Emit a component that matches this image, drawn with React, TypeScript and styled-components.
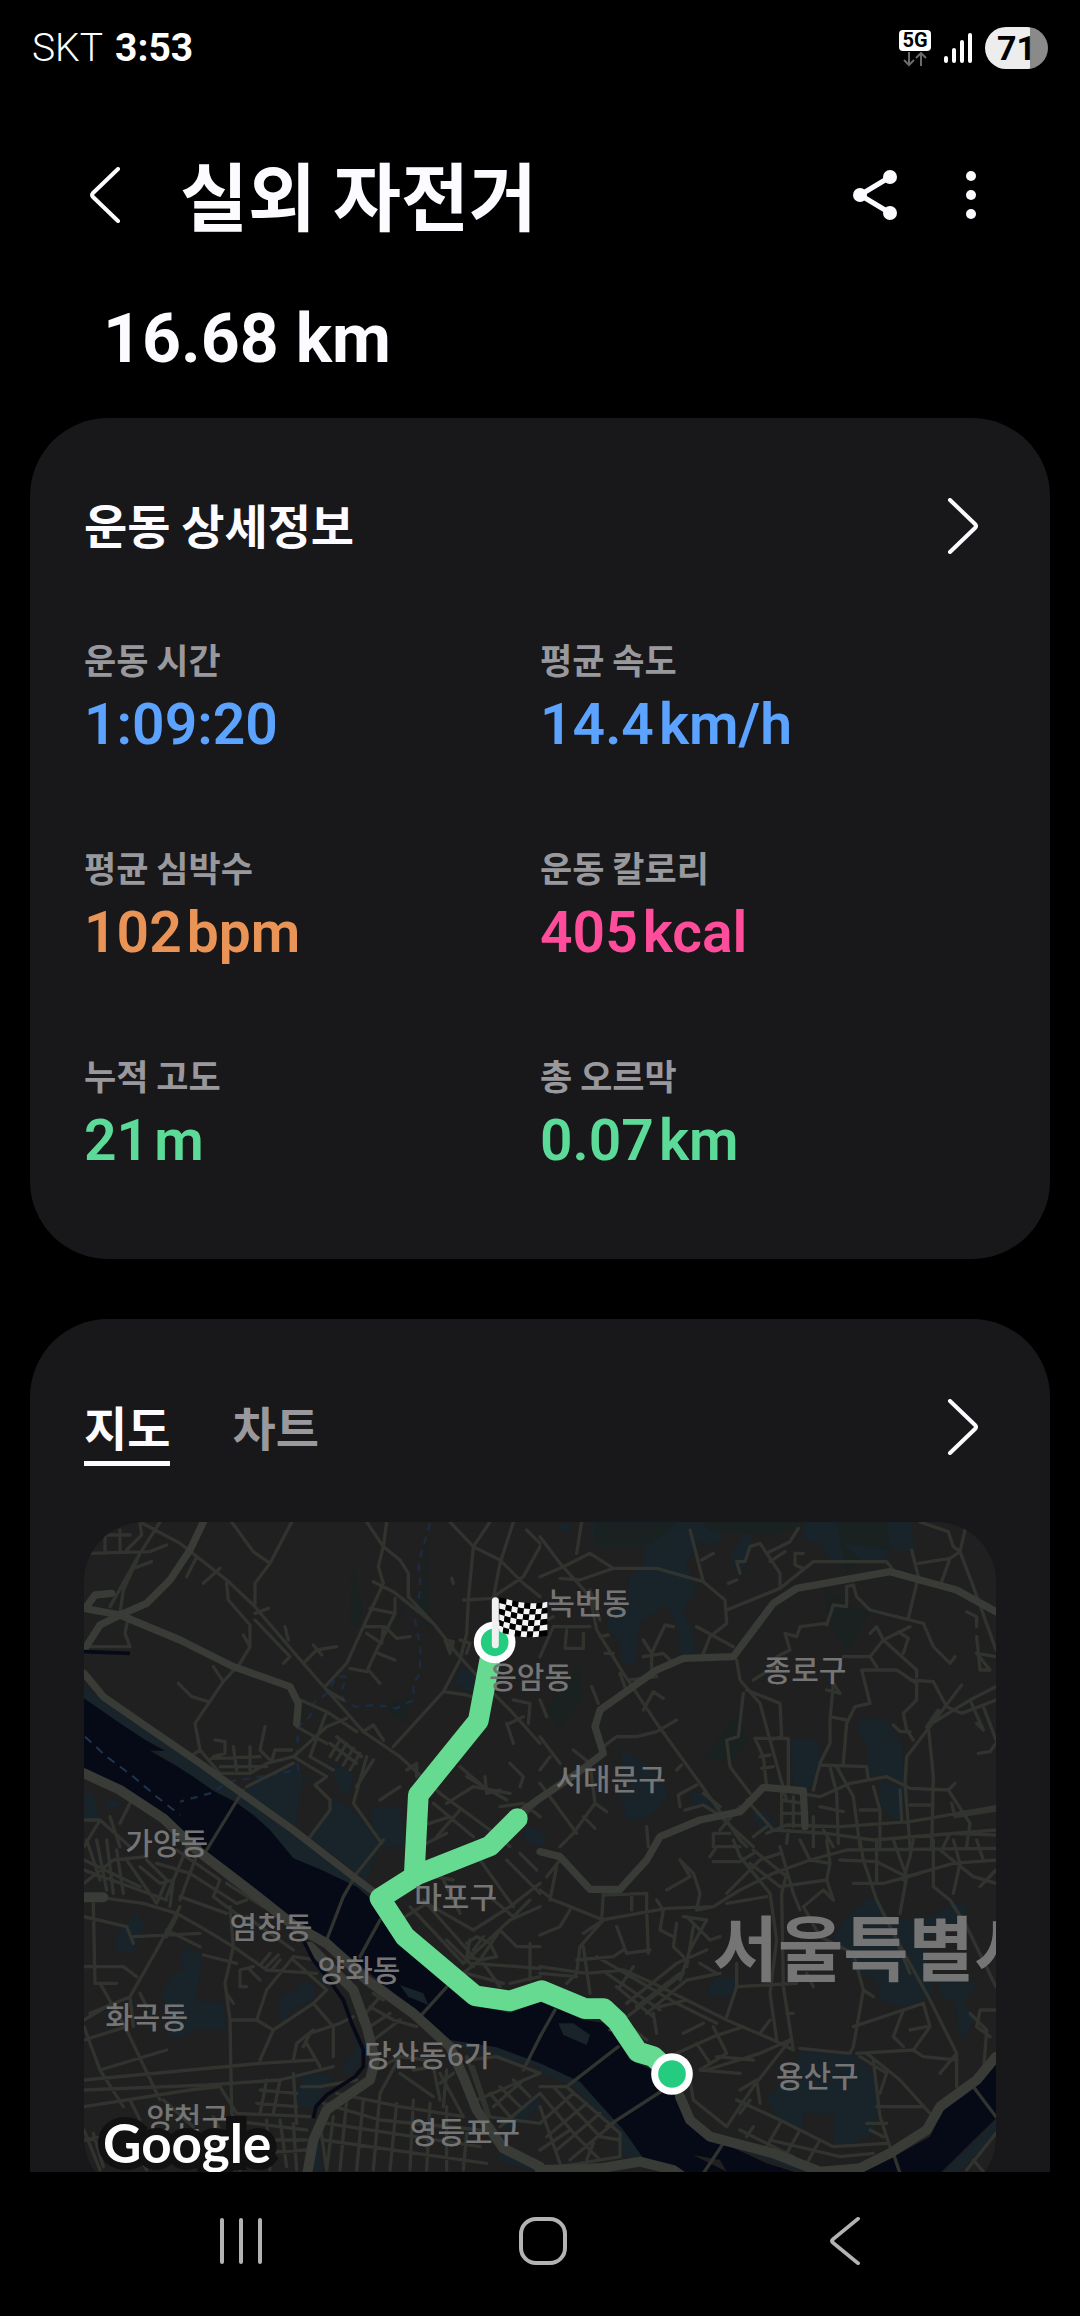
import React from 'react';
import styled, { createGlobalStyle } from 'styled-components';

const sans = `Roboto, "Noto Sans CJK KR", sans-serif`;
const korean = `"Noto Sans CJK KR", sans-serif`;

const GlobalStyle = createGlobalStyle`
  * { box-sizing: border-box; }
  body { margin: 0; background: #000; font-family: ${sans}; color: #fcfbff; }
  button { font: inherit; color: inherit; background: none; border: 0; padding: 0; cursor: pointer; }
  h1, h2, p, dl, dt, dd { margin: 0; }
  svg { display: block; }
`;

const Screen = styled.div`
  display: flex;
  flex-direction: column;
  height: 100vh;
  overflow: hidden;
`;

/* Status bar */
const StatusBar = styled.div`
  display: flex;
  align-items: center;
  justify-content: space-between;
  height: 96px;
  flex: none;
  padding: 0 32px;
  color: #fff;
`;
const StatusLeft = styled.div`
  display: flex;
  align-items: center;
  gap: 12px;
`;
const Carrier = styled.span`
  font-size: 39px;
  font-weight: 300;
`;
const Clock = styled.time`
  font-size: 39px;
  font-weight: 700;
`;
const StatusRight = styled.div`
  display: flex;
  align-items: center;
  gap: 13px;
`;
const Network = styled.div`
  display: flex;
  flex-direction: column;
  align-items: center;
  gap: 1px;
  width: 32px;
`;
const NetworkBadge = styled.span`
  width: 100%;
  border-radius: 4px;
  background: #fff;
  color: #000;
  font-size: 20px;
  line-height: 21px;
  font-weight: 700;
  text-align: center;
`;
const Battery = styled.div`
  width: 63px;
  height: 42px;
  border-radius: 21px;
  background: linear-gradient(90deg, #ededed 71%, #8a8a8a 71%);
  color: #000;
  font-size: 34px;
  line-height: 42px;
  font-weight: 700;
  text-align: center;
`;

/* Header */
const Header = styled.header`
  display: flex;
  align-items: center;
  flex: none;
  height: 198px;
  padding: 0 88px 0 84px;
`;
const IconButton = styled.button`
  display: grid;
  place-items: center;
  width: 42px;
  height: 72px;
`;
const Title = styled.h1`
  flex: 1;
  margin-left: 54px;
  padding-bottom: 4px;
  font-family: ${korean};
  font-size: 74px;
  line-height: 96px;
  font-weight: 700;
`;
const Actions = styled.div`
  display: flex;
  gap: 56px;
`;

/* Scrolling body */
const Content = styled.main`
  flex: 1;
  min-height: 0;
  padding: 0 30px;
  overflow-y: auto;
  scrollbar-width: none;
`;
const Distance = styled.p`
  padding: 5px 73px 39px;
  font-size: 68px;
  line-height: 80px;
  font-weight: 700;
`;
const Card = styled.section`
  margin-bottom: 60px;
  padding: 60px 54px;
  border-radius: 78px;
  background: #18181a;
`;
const CardHead = styled.div`
  display: flex;
  align-items: center;
  justify-content: space-between;
  height: 96px;
  padding-right: 12px;
`;
const CardTitle = styled.h2`
  padding-bottom: 4px;
  font-family: ${korean};
  font-size: 47px;
  line-height: 64px;
  font-weight: 700;
`;
const Stats = styled.dl`
  display: grid;
  grid-template-columns: 1fr 1fr;
  row-gap: 85px;
  padding: 60px 0 26px;
`;
const Stat = styled.div`
  display: grid;
  gap: 9px;
`;
const StatLabel = styled.dt`
  font-family: ${korean};
  font-size: 35px;
  line-height: 50px;
  font-weight: 700;
  color: #99989d;
`;
const StatValue = styled.dd<{ $color: string }>`
  display: flex;
  gap: 5px;
  font-size: 57px;
  line-height: 64px;
  font-weight: 600;
  color: ${(p) => p.$color};
`;

const Tabs = styled.div`
  display: flex;
  gap: 62px;
`;
const Tab = styled.button<{ $active?: boolean }>`
  padding: 6px 0 3px;
  border-bottom: 5px solid ${(p) => (p.$active ? '#fcfbff' : 'transparent')};
  font-family: ${korean};
  font-size: 47px;
  line-height: 64px;
  font-weight: 700;
  color: ${(p) => (p.$active ? '#fcfbff' : '#99989d')};
`;

/* Map */
const MapFrame = styled.div`
  position: relative;
  margin-top: 47px;
  aspect-ratio: 912 / 675;
  border-radius: 60px;
  background: #202020;
  overflow: hidden;
`;
const MapDrawing = styled.svg`
  position: absolute;
  inset: 0;
  width: 100%;
  height: 100%;
`;
const Place = styled.span<{ $x: number; $y: number; $city?: boolean }>`
  position: absolute;
  left: ${(p) => (p.$x - 12) / 27.36}%;
  top: ${(p) => (p.$y - 42) / 20.25}%;
  transform: translate(-50%, -50%);
  white-space: nowrap;
  font-family: ${korean};
  font-size: ${(p) => (p.$city ? 71 : 30)}px;
  line-height: 1;
  font-weight: ${(p) => (p.$city ? 700 : 500)};
  color: #757575;
`;
const Attribution = styled.span`
  position: absolute;
  left: 19px;
  bottom: 22px;
  font-family: Lato, sans-serif;
  font-size: 53px;
  line-height: 64px;
  font-weight: 700;
  color: #fff;
  -webkit-text-stroke: 14px #111;
  paint-order: stroke fill;
`;

/* System navigation */
const NavBar = styled.nav`
  display: grid;
  grid-template-columns: repeat(3, 1fr);
  flex: none;
  height: 144px;
  padding: 0 84px 6px 90px;
  background: #000;
`;
const NavButton = styled.button`
  display: grid;
  place-items: center;
`;

const Chevron = ({ left, color = '#fcfbff', h = 56, w = 4 }: { left?: boolean; color?: string; h?: number; w?: number }) => (
  <svg width="32" height={h} viewBox="0 0 32 56" preserveAspectRatio="none" fill="none" stroke={color} strokeWidth={w} strokeLinecap="round" strokeLinejoin="round">
    <path d={left ? 'M29 2 L4 26 Q2 28 4 30 L29 54' : 'M3 2 L28 26 Q30 28 28 30 L3 54'} />
  </svg>
);

const stats = [
  { label: '운동 시간', value: '1:09:20', unit: '', color: '#5ba3ff' },
  { label: '평균 속도', value: '14.4', unit: 'km/h', color: '#5ba3ff' },
  { label: '평균 심박수', value: '102', unit: 'bpm', color: '#ea9356' },
  { label: '운동 칼로리', value: '405', unit: 'kcal', color: '#ff4d9b' },
  { label: '누적 고도', value: '21', unit: 'm', color: '#5cda98' },
  { label: '총 오르막', value: '0.07', unit: 'km', color: '#5cda98' },
];

const places: { name: string; x: number; y: number; city?: boolean }[] = [
  { name: '녹번동', x: 1526, y: 280 },
  { name: '응암동', x: 1352, y: 500 },
  { name: '종로구', x: 2175, y: 480 },
  { name: '서대문구', x: 1592, y: 808 },
  { name: '가양동', x: 260, y: 998 },
  { name: '마포구', x: 1127, y: 1160 },
  { name: '염창동', x: 573, y: 1252 },
  { name: '양화동', x: 837, y: 1380 },
  { name: '화곡동', x: 200, y: 1520 },
  { name: '당산동6가', x: 1043, y: 1635 },
  { name: '양천구', x: 323, y: 1825 },
  { name: '영등포구', x: 1155, y: 1867 },
  { name: '용산구', x: 2212, y: 1697 },
  { name: '서울특별시', x: 2388, y: 1308, city: true },
];

/* The map is drawn as four quadrants; each group is shifted into place. */
const NE = 'translate(1380 0)';
const SW = 'translate(0 990)';
const SE = 'translate(1380 990)';

const parks = {
  nw: 'M12 530 L120 600 L260 690 L480 850 L700 1010 L860 1120 L880 1190 L620 1050 L540 960 L400 850 L290 770 L120 645 L12 575Z M490 850 L520 820 L640 765 L750 860 L745 900 L690 985 L860 1110 L900 1000 L810 890 L750 860 L705 825 L670 800 L640 990 L560 930Z M755 775 L790 765 L820 800 L810 850 L780 850Z M870 910 L890 890 L960 890 L975 1010 L900 1010Z M1125 520 L1140 480 L1175 475 L1195 540 L1170 550Z M12 850 L40 850 L60 930 L12 930Z M70 860 L130 880 L90 900Z M1340 950 L1380 960 L1380 1010 L1330 990Z',
  ne: 'M150 36 L540 36 L550 80 L510 110 L480 90 L440 160 L470 240 L430 300 L460 380 L470 430 L420 430 L410 350 L380 280 L300 340 L285 460 L250 460 L240 400 L200 350 L210 300 L260 290 L265 200 L310 170 L310 110 L165 110Z M790 36 L1115 36 L1120 110 L1085 130 L1055 110 L1030 150 L870 150 L840 100 L790 90Z M960 620 L1040 630 L1090 710 L1090 820 L1035 805 L985 790 L980 700 L955 680Z M750 690 L835 690 L840 740 L810 840 L760 830Z M245 720 L290 740 L370 810 L385 860 L330 920 L260 930 L240 850Z M445 845 L490 850 L530 900 L470 890Z M640 905 L670 900 L710 940 L680 970 L645 940Z M1020 815 L1095 830 L1085 930 L1055 925 L1020 880Z M570 140 L620 60 L640 100 L600 200Z M0 965 L20 975 L10 1010 L0 1010Z M60 40 L95 40 L90 65 L60 60Z',
  sw: 'M160 230 L175 215 L200 270 L175 280 L160 340 L100 330 L120 270Z M300 340 L325 320 L370 350 L345 480 L430 490 L440 570 L350 570 L290 600 L260 580 L270 540 L245 460 L280 400 L310 390Z M650 450 L670 420 L705 440 L700 480 L640 500 L610 550 L595 530 L605 470Z M660 710 L720 697 L765 710 L740 740 L700 800 L650 800 L645 750 L665 740Z M870 410 L1020 530 L1110 600 L1250 615 L1380 650 L1380 680 L1200 640 L1090 610 L980 520Z M950 435 L1030 460 L1040 495 L980 470Z M1255 860 L1380 770 L1380 800 L1290 870Z M700 890 L715 880 L725 990 L700 1000Z M1260 930 L1380 975 L1380 1000 L1250 960Z M790 470 L850 640 L820 700 L780 700 L830 620Z',
  se: 'M0 665 L110 700 L200 790 L260 860 L310 960 L250 950 L240 870 L200 850 L100 740 L0 700Z M60 545 L100 550 L150 585 L140 615 L70 585Z M0 510 L55 540 L30 560 L0 545Z M530 410 L580 410 L590 440 L560 470 L505 465 L505 440Z M880 290 L920 230 L985 175 L1020 180 L1050 240 L1180 230 L1240 185 L1280 200 L1265 260 L1150 300 L1180 460 L1110 505 L1020 480 L1010 420 L950 400Z M1190 420 L1315 430 L1270 490 L1310 540 L1260 595 L1245 480 L1210 480Z M780 635 L940 640 L1000 700 L1015 800 L1000 885 L940 910 L880 910 L885 825 L790 820 L790 880 L710 830 L680 770 L750 720Z M430 800 L470 860 L600 900 L840 990 L760 990 L560 910 L480 880 L440 840Z M1368 840 L1368 890 L1250 1000 L1210 1000Z M1280 995 L1330 1000 L1368 1040 L1280 1080Z',
};

const woods =
  'M815 175 L850 310 L835 345 L812 345Z M1040 60 L1050 360 L1020 320 L1010 250 L940 350 L980 270 L1025 240Z M910 590 L990 560 L975 640Z M1540 40 L1790 40 L1710 105 L1550 105Z M1870 36 L2180 36 L2080 75 L1890 65Z M2270 36 L2420 36 L2430 120 L2290 100 L2340 150 L2300 190Z M2230 230 L2310 290 L2370 310 L2300 420 L2250 340Z M1400 600 L1490 475 L1510 560 L1440 650Z M1870 750 L1980 600 L2000 700 L1960 750Z';

const river =
  'M12 565 L120 640 L200 692 L255 722 L210 722 L290 768 L340 800 L400 842 L465 875 L520 915 L570 960 L640 1045 L720 1078 L830 1130 L900 1190 L960 1300 L1160 1480 L1290 1510 L1380 1475 L1510 1530 L1580 1540 L1650 1650 L1740 1690 L1800 1780 L1840 1850 L1920 1895 L2060 1960 L2220 2010 L2340 1980 L2440 1940 L2550 1880 L2590 1800 L2710 1700 L2748 1650 L2748 1825 L2570 2000 L2520 2070 L1900 2070 L1780 1970 L1690 1945 L1630 1860 L1500 1715 L1380 1660 L1250 1612 L1110 1590 L1020 1515 L870 1390 L740 1285 L600 1205 L500 1115 L385 1028 L250 925 L130 845 L12 775Z';

const highways =
  'M12 295 L120 315 L200 280 L270 210 L330 120 L370 36 M120 315 L300 390 L460 470 L630 530 L655 580 L650 640 M120 315 L60 345 L12 420 M12 490 L70 560 L200 650 L360 760 L500 860 L640 960 L820 1100 L900 1160 M20 290 L45 255 L95 250 M2748 305 L2630 240 L2520 210 L2430 185 L2150 235 L2080 280 L1960 440 L1810 445 L1730 480 L1560 600 L1545 650 L1570 730 L1490 790 L1380 865 L1330 900 M1380 1025 L1440 1040 L1530 1138 L1620 1138 L1700 1050 L1740 980 L1860 930 L1980 905 L2050 832 L2170 842 L2175 950';

const riverside =
  'M12 790 L120 840 L250 925 L350 1020 L520 1150 L640 1245 L740 1300 L860 1410 L1000 1510 L1110 1610 L1150 1700 L1190 1800 L1270 1915 L1380 1970 M690 1310 L820 1440 L860 1550 L885 1650 L870 1710 L740 1800 L700 1890 L680 2000 M1800 1760 L1830 1830 L1890 1880 L2080 1930 L2220 1985 L2340 1975 L2430 1930 L2540 1860 L2580 1790 L2690 1710 L2748 1640 M1380 1980 L1560 1975 L1680 1955 L1780 1980 L1880 2050 M12 1162 L70 1162';

const roads = {
  nw: 'M180 36 L300 100 L440 210 L520 285 L610 390 L670 460 L740 540 L850 665 L960 740 L1080 850 L1230 960 L1290 1010 M20 130 L210 125 L260 105 M75 75 L75 130 M120 60 L120 120 M140 120 L185 75 L180 40 M70 75 L150 75 M240 36 L180 130 L130 240 L120 310 M180 130 L90 290 M160 175 L215 155 M455 36 L520 125 L570 160 L635 36 M570 160 L525 220 L525 285 M320 200 L350 140 M370 220 L420 175 M440 220 L445 270 L510 345 L510 410 L480 460 L430 515 L345 640 L360 720 M490 375 L510 410 M525 310 L565 295 M525 330 L630 440 L610 460 M615 350 L625 390 M670 460 L710 420 L770 410 M700 405 L725 435 M400 470 L430 515 M295 520 L335 560 L385 575 M735 530 L800 460 L850 350 L910 220 L895 170 L910 110 L860 36 M910 110 L920 36 M910 110 L960 150 L985 190 L985 260 L1060 340 L1130 430 L1230 540 L1290 600 L1380 700 M880 215 L940 245 L1060 340 M945 265 L945 310 L895 410 L860 485 L810 475 M870 295 L945 310 M850 350 L910 350 L905 400 L860 370 M915 350 L950 385 L990 380 M865 480 L900 520 M895 430 L945 450 M640 560 L740 605 L830 665 M640 740 L740 650 L800 625 M640 740 L560 760 L510 790 L420 790 L360 720 L330 740 M405 690 L435 695 L435 730 L400 740 M460 710 L470 780 M510 710 L510 780 M395 745 L540 740 M420 770 L560 770 M555 650 L540 720 L575 755 M575 755 L585 720 L635 720 M640 740 L740 800 L705 825 L750 870 L750 900 L690 980 M650 650 L740 700 M690 740 L760 780 M500 830 L640 760 M490 840 L380 1020 M740 540 L790 570 M740 605 L690 740 M770 680 L845 740 M750 700 L830 760 M780 690 L750 740 M800 700 L770 750 M820 715 L790 765 M840 730 L810 780 M860 740 L820 880 L905 1000 M880 750 L830 830 M900 870 L960 830 M850 665 L880 645 L910 690 M940 710 L1090 545 L1140 450 L1160 370 L1165 270 L1180 110 L1110 36 M1180 110 L1230 36 M1180 110 L1260 150 L1330 220 L1380 260 M1150 270 L1240 265 L1260 160 L1300 36 M1090 545 L1160 555 L1230 580 M1095 390 L1120 395 L1110 430 L1095 390 M1140 390 L1170 400 L1160 430 M1115 205 L1120 220 M1330 200 L1240 260 M1330 200 L1380 110 M1340 60 L1380 100 M1300 570 L1350 580 L1345 640 M1280 640 L1300 700 M1290 640 L1330 620 M1100 880 L1180 830 L1290 850 M1160 800 L1280 870 M1140 770 L1210 830 M1060 880 L1180 980 M1070 980 L1140 900 M1020 950 L1110 920 M1040 1000 L1100 970 M1215 800 L1220 850 L1260 840 M1290 760 L1330 800 L1320 830 M1260 890 L1330 880 L1380 920 M1380 870 L1330 920 M20 410 L150 410 L135 370 L145 320 M980 780 L1010 760 L1010 800 M12 930 L60 930 L150 1010 M90 920 L120 1010 M60 930 L12 1010 M150 880 L120 940',
  ne: 'M0 200 L70 170 L150 130 L220 175 L350 175 L490 215 L555 270 L560 340 L510 380 L490 430 M0 80 L60 160 L150 260 L170 360 L250 490 L350 640 L480 820 L600 990 L620 1010 M110 130 L125 36 M60 205 L120 210 L220 175 M450 60 L490 215 M485 150 L520 130 M560 300 L720 235 L820 155 L1040 155 L1060 180 M720 235 L720 190 L660 100 L630 110 L615 155 L590 155 L600 190 M680 130 L750 95 L775 55 M690 155 L735 125 M790 130 L765 130 L765 165 L790 175 M565 220 L590 210 M470 350 L580 410 M590 450 L600 510 L660 580 L690 690 L740 870 M620 540 L720 580 L725 680 M610 550 L595 680 L560 690 L570 770 L630 850 M640 510 L720 460 M690 690 L725 680 M660 740 L690 735 M665 775 L700 770 M645 685 L745 685 L745 830 M645 685 L670 740 L680 830 M860 340 L780 350 L770 380 L735 370 L750 420 L710 440 M860 345 L880 285 L920 290 L920 230 L940 225 L950 260 L990 300 L1150 340 L1180 410 L1230 460 L1245 440 M1105 325 L1135 200 L1115 120 M1135 160 L1230 145 L1260 125 L1275 60 M1230 145 L1205 215 M1260 125 L1300 230 L1368 420 M1140 36 L1225 65 L1240 110 L1260 125 M1280 305 L1310 320 L1310 350 M1310 380 L1320 480 L1350 480 L1310 430 L1368 440 M990 370 L1010 350 L1030 390 L990 440 L910 440 M1030 390 L1110 350 M1075 365 L1105 385 L1090 430 M1030 390 L1130 480 L1130 500 M965 480 L1070 480 L1130 520 L1130 570 L1090 610 L1100 660 L1120 690 M965 480 L990 580 L945 590 L920 640 L910 760 M860 540 L900 550 L880 520 L870 630 L870 700 L840 760 L820 840 M870 620 L920 630 M990 440 L1010 470 M1110 510 L1180 515 L1220 590 L1265 610 L1368 570 M1265 525 L1100 740 L1095 820 L1110 1010 M1165 650 L1180 800 L1175 1010 M1195 600 L1160 650 M1368 530 L1290 570 L1160 650 M1290 570 L1330 660 L1310 640 M1330 590 L1368 690 M1315 730 L1350 725 L1368 700 M1060 645 L1080 665 L1110 665 M840 765 L980 770 L985 810 L1040 800 L1110 835 L1225 840 L1245 820 M1110 885 L1180 885 M1225 840 L1290 940 M1235 880 L1245 920 L1368 900 M720 840 L840 860 L930 820 L1040 800 M870 770 L890 850 L895 1000 M890 770 L940 860 L960 1010 M725 840 L725 960 M760 860 L760 950 M725 870 L790 880 M725 910 L800 910 M680 970 L740 945 L900 950 L1110 935 L1368 890 M700 960 L860 970 L1000 990 L1368 960 M960 900 L1020 900 L1020 1010 M1000 830 L1020 900 M1080 840 L1085 930 M840 890 L910 905 M820 920 L820 1010 M850 960 L880 1010 M1210 1010 L1230 970 L1368 975 M1280 1010 L1290 940 M740 1000 L745 960 M520 1010 L520 970 L570 970 M530 910 L640 1010 M620 870 L700 960 M640 980 L680 950 M600 890 L540 960 M420 890 L415 855 L470 825 M490 850 L540 890 M435 900 L490 885 L530 910 M410 780 L425 765 M310 600 L340 545 L370 565 M410 630 L350 665 L290 680 L230 680 L190 710 M260 545 L240 490 M310 390 L335 430 L335 480 M335 430 L375 345 L400 350 M310 440 L370 430 L390 450 M270 510 L350 500 M155 530 L175 580 M40 350 L90 350 L150 350 M80 360 L75 415 L130 415 L130 370 M150 240 L180 330 M0 340 L40 320 M0 440 L40 350 M0 570 L20 620 M0 680 L60 760 M0 820 L110 970 M100 720 L150 760 L165 880 L200 905 M165 880 L100 970 L60 1010 M320 950 L325 1010 M0 780 L30 740 M130 920 L165 955 M205 375 L180 380 M220 430 L195 430',
  sw: 'M12 130 L100 60 L200 50 M20 0 L60 120 M50 0 L80 150 M80 0 L100 160 M110 30 L130 160 M140 60 L230 190 M12 60 L180 140 M12 90 L260 180 M40 170 L190 190 L290 220 L360 260 L460 320 L560 390 L710 400 M290 220 L230 330 L150 470 L30 520 M12 230 L140 260 L160 310 M160 290 L360 280 M40 190 L45 430 L110 430 M12 380 L130 380 L170 410 M60 430 L140 570 L240 780 M150 470 L160 560 M180 460 L200 500 M12 540 L80 500 M12 600 L140 560 M60 690 L260 630 M12 720 L540 670 L700 660 M12 750 L380 735 L600 720 L760 680 M12 800 L330 750 L420 740 L470 820 M12 560 L60 690 L130 800 M450 200 L460 320 L435 430 L450 540 L455 820 L470 850 M370 345 L470 370 M460 490 L440 460 M450 540 L530 540 L580 570 L540 660 M530 540 L560 450 L640 350 L710 360 M580 570 L700 490 L740 450 L640 360 M520 380 L480 390 L480 440 L500 440 M510 390 L540 420 M545 370 L570 340 M560 380 L595 345 M575 390 L600 360 M200 60 L260 120 L230 190 M180 80 L240 130 L280 120 L270 200 M230 70 L330 100 L470 190 L500 180 M290 30 L420 120 L400 170 M360 20 L300 180 M330 0 L260 170 M440 130 L550 200 L700 290 M300 170 L440 220 M300 200 L260 280 M260 270 L360 320 M260 290 L290 230 M500 230 L640 330 M400 170 L480 230 M740 300 L790 170 L830 100 L910 0 M840 350 L900 240 M1020 530 L1110 430 M1330 690 L1380 590 M670 620 L690 580 L780 550 L820 530 M640 660 L650 610 L700 570 M700 490 L760 560 L760 650 M680 610 L720 680 M560 720 L540 820 M600 720 L580 820 M640 700 L650 850 M540 750 L650 760 M530 790 L650 800 M470 820 L690 830 M440 840 L680 870 M500 900 L680 900 M520 940 L680 930 M600 840 L620 980 M560 840 L570 990 M640 850 L650 990 M400 830 L480 990 M200 990 L170 930 M12 870 L60 990 M12 900 L180 870 M40 880 L70 980 M250 780 L340 860 M150 780 L180 840 M665 740 L720 740 L830 720 M840 540 L900 470 M870 500 L940 540 L1010 560 M870 560 L930 520 M880 600 L960 540 M910 480 L880 460 M730 790 L900 840 L1200 870 M770 760 L960 800 L1150 830 M740 850 L1200 920 M730 900 L1220 970 M870 700 L960 650 L1040 660 M960 650 L900 760 M1000 690 L1060 680 L1080 780 M1100 690 L1090 800 M1120 700 L1080 730 M760 830 L740 990 M800 780 L780 990 M850 780 L830 990 M900 760 L880 990 M950 790 L930 990 M1000 780 L990 990 M1050 790 L1040 990 M1100 800 L1100 990 M1160 880 L1150 990 M720 850 L740 990 M960 700 L1060 770 M1080 700 L1150 830 M1160 650 L1220 820 M1180 680 L1230 830 M1160 660 L1250 650 L1380 700 M1190 780 L1380 700 M1230 760 L1290 830 M1260 740 L1320 800 M1300 720 L1350 770 M1240 800 L1330 720 M1220 830 L1380 850 M1260 860 L1380 760 M1010 100 L1120 120 M960 240 L1040 190 L1180 270 L1290 200 L1380 130 M990 200 L1150 370 L1290 240 L1380 200 M1030 180 L1180 350 M1080 100 L1140 220 M1200 60 L1300 200 M1280 60 L1380 160 M1320 40 L1370 90 M1160 310 L1190 290 L1230 310 L1250 350 L1200 360 L1160 350 L1170 300 M1210 290 L1180 330 M1110 430 L1200 360 L1260 270 L1310 320 L1380 320 M1180 370 L1380 385 M1160 400 L1270 430 M1290 430 L1380 410 M1210 370 L1260 440 M1350 310 L1350 420 M1240 180 L1300 230 L1350 180 M1100 300 L1180 380',
  se: 'M0 150 L40 180 L90 200 L190 240 L130 280 M30 180 L50 80 M60 60 L20 110 M90 210 L60 260 L0 285 M190 160 L185 240 L380 205 L520 200 L600 150 L700 100 L810 60 L920 30 L1368 25 M190 165 L320 160 L320 210 L325 340 M275 160 L275 210 M230 260 L260 340 L330 330 M190 240 L120 320 L110 400 L80 430 M130 320 L150 460 M110 360 L220 350 L250 330 M350 180 L370 210 L360 270 L400 290 M380 150 L450 110 L420 60 L460 100 L480 160 L470 210 L520 200 M410 250 L400 320 L430 350 M440 230 L510 300 L540 290 M430 230 L500 240 L450 330 L420 420 M460 260 L440 380 M0 380 L140 400 L250 390 L340 430 L440 480 L560 540 L700 600 L760 630 M0 400 L110 410 M170 350 L290 420 L410 490 L530 550 M200 400 L360 510 M230 440 L340 530 M260 490 L410 370 L500 330 M290 500 L420 400 M320 520 L440 420 M210 570 L430 400 M350 580 L340 520 M280 380 L240 440 M270 560 L320 600 M360 500 L440 480 M490 550 L430 580 M410 640 L520 590 L610 560 M470 610 L510 670 M520 560 L560 640 L480 690 L600 700 M500 690 L660 640 L750 600 M530 650 L640 660 M440 660 L460 780 L560 860 L640 740 L750 600 M590 780 L720 840 L880 920 L1040 910 M600 750 L650 720 L660 790 M630 780 L600 820 M710 600 L690 460 L710 300 L690 160 L600 50 L580 0 M760 630 L730 440 L725 160 L740 100 M590 440 L770 430 M590 370 L590 440 L560 530 M740 520 L760 520 M690 540 L660 580 M720 20 L760 160 L780 210 M630 70 L720 140 L860 120 M640 30 L740 110 M560 160 L660 60 L720 40 M560 190 L680 170 M510 50 L530 20 L600 20 M520 65 L600 65 L640 40 M780 0 L810 60 L870 70 L860 120 L880 180 M860 0 L870 70 M900 60 L1010 65 L1100 110 L1240 70 L1368 60 M940 130 L1030 130 L1140 100 M960 0 L970 60 L1010 180 L1060 280 L1170 480 L1210 560 L1250 640 L1250 740 M1010 0 L1010 130 M1060 0 L1100 110 L1080 220 M1120 0 L1110 50 L1090 120 M1180 0 L1180 140 L1230 180 L1280 260 L1368 440 M1240 0 L1260 70 L1240 160 M1200 30 L1300 110 L1368 130 M1310 0 L1330 60 M1368 90 L1320 140 M880 180 L850 150 L790 200 L840 290 L940 340 L970 450 M1020 200 L1060 280 L1110 400 M1000 470 L970 450 L940 620 L930 640 L780 625 M940 560 L1090 510 L1150 490 L1170 560 L1120 630 L950 640 M1090 510 L1060 590 L1090 620 M1110 570 L1160 560 M1120 630 L1150 650 L1250 660 M980 640 L1080 720 L1170 820 M1010 800 L1150 800 M1000 660 L1020 830 L1050 920 M960 650 L1040 700 L1020 760 M1368 510 L1320 510 L1310 560 L1350 590 M1290 520 L1340 570 L1330 700 M1250 640 L1200 700 M1300 740 L1368 830 M1060 940 L1080 1000 M490 1000 L550 910 M200 860 L370 750 M0 740 L80 740 L235 620 M0 590 L45 510 M80 740 L240 880 L240 950 L60 980 M0 760 L110 890 L180 960 M40 740 L180 890 L240 900 M0 800 L60 970 M0 850 L100 760 M20 890 L140 790 M50 930 L180 820 M90 960 L220 850 M0 930 L90 870 M140 960 L160 910 M640 860 L620 890 M720 850 L680 920 M780 870 L740 940 M840 900 L800 970 M690 900 L900 950 L1000 940 M600 870 L760 950 M980 850 L1040 850 M990 870 L1030 890 M1368 880 L1280 990 M1300 960 L1368 1040 M820 440 L800 400 M440 420 L540 400 M530 400 L480 370',
};

const trails =
  'M1050 40 L1030 110 L1015 160 L1022 230 L1005 330 L1022 420 L1020 490 L1000 520 L1000 570 L950 595 L890 585 L825 590 L790 570 L785 540 L800 500 L770 500 L740 550 L700 580 L690 620 L655 650 L650 740 L655 780 L540 800 L450 815 L390 850 L300 875';
const ferry = 'M15 680 L80 740 L160 800 L230 860 L300 915';
const stream = 'M672 1295 L700 1350 L740 1400 L790 1470 L815 1540 L850 1620 L850 1670 L825 1700 L740 1755 L708 1790 L700 1825 M12 425 L150 430';
const route =
  'M1235 420 L1195 632 L1015 855 L1003 1090 M1312 926 L1230 1008 L1010 1095 L900 1165 L975 1280 L1185 1457 L1290 1473 L1385 1442 L1515 1496 L1572 1496 L1612 1534 L1674 1626 L1720 1640 L1776 1692';

/* Chequered cloth, sheared row by row so that it seems to wave. */
const FinishFlag = () => {
  const cols = 8;
  const rows = 6;
  const w = 18;
  const h = 17;
  const top = (c: number) => 262 + Math.sin((c / cols) * 2.3) * 18;
  const side = (c: number, r: number) => 1258 + c * w - (c === 0 || c === cols ? 0 : r * 2 - 4);
  const corner = (c: number, r: number) => `${side(c, r)} ${top(c) + r * h}`;
  const squares: React.ReactNode[] = [];
  for (let c = 0; c < cols; c++) {
    for (let r = 0; r < rows; r++) {
      squares.push(
        <path
          key={`${c}-${r}`}
          fill={(c + r) % 2 ? '#f4f4f4' : '#000'}
          d={`M${corner(c, r)} L${corner(c + 1, r)} L${corner(c + 1, r + 1)} L${corner(c, r + 1)}Z`}
        />,
      );
    }
  }
  return (
    <g>
      {squares}
      <path d="M1246 272 V404" stroke="#f0f0f0" strokeWidth="21" strokeLinecap="round" />
    </g>
  );
};

const RouteMap = () => (
  <MapFrame>
    <MapDrawing viewBox="12 36 2736 2025" aria-hidden="true">
      <g fill="#18232a">
        <path d={parks.nw} />
        <path d={parks.ne} transform={NE} />
        <path d={parks.sw} transform={SW} />
        <path d={parks.se} transform={SE} />
      </g>
      <path d={woods} fill="#1a2121" />
      <path d={river} fill="#060a17" />
      <path d="M960 1425 L1030 1450 L1045 1485 L985 1460Z M1435 1540 L1480 1540 L1530 1575 L1520 1605 L1450 1575Z" fill="#18232a" />
      <path d="M1840 1935 L1920 1950 L1940 1985Z" fill="#202020" />
      <path d={trails} fill="none" stroke="#1c2c40" strokeWidth="7" strokeDasharray="22 20" />
      <path d={ferry} fill="none" stroke="#22344b" strokeWidth="6" strokeDasharray="26 20" />
      <g fill="none" stroke="#31332f" strokeWidth="10" strokeLinecap="round" strokeLinejoin="round">
        <path d={roads.nw} />
        <path d={roads.ne} transform={NE} />
        <path d={roads.sw} transform={SW} />
        <path d={roads.se} transform={SE} />
      </g>
      <g fill="none" stroke="#393b37" strokeLinecap="round" strokeLinejoin="round">
        <path d={highways} strokeWidth="22" />
        <path d={riverside} strokeWidth="30" />
      </g>
      <path d={stream} fill="none" stroke="#060a17" strokeWidth="11" />
      <path d={route} fill="none" stroke="#65da90" strokeWidth="62" strokeLinecap="round" strokeLinejoin="round" />
    </MapDrawing>
    {places.map((p) => (
      <Place key={p.name} $x={p.x} $y={p.y} $city={p.city}>
        {p.name}
      </Place>
    ))}
    <MapDrawing viewBox="12 36 2736 2025" role="img" aria-label="경로">
      <g fill="#24cc80" stroke="#fff" strokeWidth="21">
        <circle cx="1244" cy="397" r="52" />
        <circle cx="1776" cy="1692" r="52" />
      </g>
      <FinishFlag />
    </MapDrawing>
    <Attribution>Google</Attribution>
  </MapFrame>
);

export default function App() {
  return (
    <Screen>
      <GlobalStyle />
      <StatusBar>
        <StatusLeft>
          <Carrier>SKT</Carrier>
          <Clock>3:53</Clock>
        </StatusLeft>
        <StatusRight>
          <Network>
            <NetworkBadge>5G</NetworkBadge>
            <svg width="24" height="15" viewBox="0 0 24 15" fill="none" stroke="#6b6b6b" strokeWidth="2">
              <path d="M6 0 V13 M1 8 L6 13 L11 8 M18 14 V1 M13 6 L18 1 L23 6" />
            </svg>
          </Network>
          <svg width="28" height="30" viewBox="0 0 28 30" stroke="#fff" strokeWidth="4" strokeLinecap="round">
            <path d="M2 25 V28 M10 17 V28 M18 9 V28 M26 2 V28" />
          </svg>
          <Battery>71</Battery>
        </StatusRight>
      </StatusBar>

      <Header>
        <IconButton aria-label="뒤로">
          <Chevron left />
        </IconButton>
        <Title>실외 자전거</Title>
        <Actions>
          <IconButton aria-label="공유">
            <svg width="46" height="50" viewBox="0 0 46 50" fill="#fcfbff">
              <path d="M38 7 L8 25 L38 43" fill="none" stroke="#fcfbff" strokeWidth="5" />
              <circle cx="38" cy="7" r="7" />
              <circle cx="8" cy="25" r="7" />
              <circle cx="38" cy="43" r="7" />
            </svg>
          </IconButton>
          <IconButton aria-label="더보기">
            <svg width="10" height="48" viewBox="0 0 10 48" fill="#fcfbff">
              <circle cx="5" cy="5" r="5" />
              <circle cx="5" cy="24" r="5" />
              <circle cx="5" cy="43" r="5" />
            </svg>
          </IconButton>
        </Actions>
      </Header>

      <Content>
        <Distance>16.68 km</Distance>
        <Card>
          <CardHead>
            <CardTitle>운동 상세정보</CardTitle>
            <IconButton aria-label="운동 상세정보 열기">
              <Chevron />
            </IconButton>
          </CardHead>
          <Stats>
            {stats.map((s) => (
              <Stat key={s.label}>
                <StatLabel>{s.label}</StatLabel>
                <StatValue $color={s.color}>
                  <span>{s.value}</span>
                  {s.unit && <span>{s.unit}</span>}
                </StatValue>
              </Stat>
            ))}
          </Stats>
        </Card>
        <Card>
          <CardHead>
            <Tabs role="tablist">
              <Tab role="tab" aria-selected="true" $active>
                지도
              </Tab>
              <Tab role="tab" aria-selected="false">
                차트
              </Tab>
            </Tabs>
            <IconButton aria-label="지도 열기">
              <Chevron />
            </IconButton>
          </CardHead>
          <RouteMap />
        </Card>
      </Content>

      <NavBar>
        <NavButton aria-label="최근 앱">
          <svg width="44" height="48" viewBox="0 0 44 48" stroke="#b3b3b3" strokeWidth="4" strokeLinecap="round">
            <path d="M3 3 V45 M22 3 V45 M41 3 V45" />
          </svg>
        </NavButton>
        <NavButton aria-label="홈">
          <svg width="48" height="48" viewBox="0 0 48 48" fill="none" stroke="#b3b3b3" strokeWidth="4">
            <rect x="2" y="2" width="44" height="44" rx="15" />
          </svg>
        </NavButton>
        <NavButton aria-label="뒤로 가기">
          <Chevron left color="#b3b3b3" h={48} w={4} />
        </NavButton>
      </NavBar>
    </Screen>
  );
}
